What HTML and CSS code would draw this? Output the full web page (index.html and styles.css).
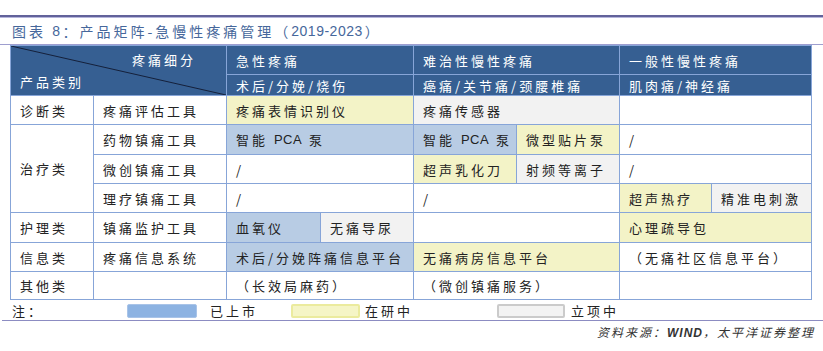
FILE: index.html
```html
<!DOCTYPE html>
<html lang="zh-CN">
<head>
<meta charset="utf-8">
<title>产品矩阵-急慢性疼痛管理</title>
<link rel="stylesheet" href="styles.css">
</head>
<body>
<div class="page">
  <div class="rule-top"></div>
  <div class="title">图表&nbsp;<span class="lat">8</span>：产品矩阵-急慢性疼痛管理（<span class="lat">2019-2023</span>）</div>
  <div class="rule"></div>

  <div class="matrix">
    <div class="c h diag">
      <svg class="diag-line" viewBox="0 0 215 49" preserveAspectRatio="none"><line x1="0" y1="0" x2="215" y2="49" stroke="#15203a" stroke-width="1"/></svg>
      <div class="diag-top">疼痛细分</div>
      <div class="diag-bottom">产品类别</div>
    </div>
    <div class="c h s2">急性疼痛</div>
    <div class="c h s2">难治性慢性疼痛</div>
    <div class="c h s2">一般性慢性疼痛</div>
    <div class="c h s2">术后/分娩/烧伤</div>
    <div class="c h s2">癌痛/关节痛/颈腰椎痛</div>
    <div class="c h s2">肌肉痛/神经痛</div>

    <div class="c">诊断类</div>
    <div class="c">疼痛评估工具</div>
    <div class="c s2 yel">疼痛表情识别仪</div>
    <div class="c s2 gray">疼痛传感器</div>
    <div class="c s2"></div>

    <div class="c r3">治疗类</div>
    <div class="c">药物镇痛工具</div>
    <div class="c s2 blue">智能&nbsp;<span class="abbr">PCA</span>&nbsp;泵</div>
    <div class="c blue">智能&nbsp;<span class="abbr">PCA</span>&nbsp;泵</div>
    <div class="c yel">微型贴片泵</div>
    <div class="c s2">/</div>

    <div class="c">微创镇痛工具</div>
    <div class="c s2">/</div>
    <div class="c yel">超声乳化刀</div>
    <div class="c gray">射频等离子</div>
    <div class="c s2">/</div>

    <div class="c">理疗镇痛工具</div>
    <div class="c s2">/</div>
    <div class="c s2">/</div>
    <div class="c yel">超声热疗</div>
    <div class="c gray">精准电刺激</div>

    <div class="c">护理类</div>
    <div class="c">镇痛监护工具</div>
    <div class="c blue">血氧仪</div>
    <div class="c gray">无痛导尿</div>
    <div class="c s2"></div>
    <div class="c s2 yel">心理疏导包</div>

    <div class="c">信息类</div>
    <div class="c">疼痛信息系统</div>
    <div class="c s2 blue">术后/分娩阵痛信息平台</div>
    <div class="c s2 yel">无痛病房信息平台</div>
    <div class="c s2">（无痛社区信息平台）</div>

    <div class="c">其他类</div>
    <div class="c"></div>
    <div class="c s2">（长效局麻药）</div>
    <div class="c s2">（微创镇痛服务）</div>
    <div class="c s2"></div>
  </div>

  <div class="legend">
    <div class="note">注：</div>
    <div class="sw sw-blue"></div>
    <div class="lbl lbl1">已上市</div>
    <div class="sw sw-yel"></div>
    <div class="lbl lbl2">在研中</div>
    <div class="sw sw-gray"></div>
    <div class="lbl lbl3">立项中</div>
  </div>
  <div class="rule2"></div>
  <div class="source">资料来源：<span class="src-lat">WIND</span>，太平洋证券整理</div>
</div>
</body>
</html>
```

FILE: styles.css
```css
html, body {
  margin: 0;
  padding: 0;
  background: #ffffff;
}

body {
  width: 823px;
  height: 351px;
  overflow: hidden;
  font-family: "Noto Sans CJK SC", "Noto Sans", sans-serif;
  color: #222222;
}

.page {
  padding-top: 15px;
}

.rule-top {
  height: 2px;
  background: #62629a;
  border-bottom: 1px solid #b6b6dc;
}

.title {
  height: 26px;
  display: flex;
  align-items: center;
  padding-left: 12px;
  font-size: 14px;
  letter-spacing: 3px;
  color: #46679b;
  line-height: 1;
  white-space: nowrap;
}

.title .lat {
  font-family: "Liberation Sans", sans-serif;
  font-size: 14px;
  letter-spacing: 0.5px;
  margin-right: 2px;
}

.rule {
  height: 1px;
  background: #9e9ecf;
}

.matrix {
  margin-left: 10px;
  width: 802px;
  box-sizing: border-box;
  display: grid;
  grid-template-columns: 82px 132px 93px 92px 102px 102px 91px 99px;
  grid-template-rows: 28px 20px 28px 29px 28px 28px 29px 28px 27px;
  gap: 1px;
  padding: 1px;
  background: #87a5d8;
}

.c {
  background: #ffffff;
  display: flex;
  align-items: center;
  padding-left: 9px;
  font-size: 13px;
  letter-spacing: 3px;
  line-height: 1;
  white-space: nowrap;
  overflow: hidden;
  min-width: 0;
}

.abbr {
  font-family: "Liberation Sans", sans-serif;
  letter-spacing: 0.5px;
  margin-right: 1px;
}

.h {
  background: #365f92;
  color: #ffffff;
}

.blue { background: #b8cce4; }
.yel { background: #f3f3c7; }
.gray { background: #f2f2f2; }

.s2 { grid-column: span 2; }
.r3 { grid-row: span 3; }

.diag {
  grid-column: span 2;
  grid-row: span 2;
  position: relative;
  display: block;
  padding: 0;
}

.diag-line {
  position: absolute;
  left: 0;
  top: 0;
  width: 100%;
  height: 100%;
}

.diag-top {
  position: relative;
  text-align: right;
  padding-right: 30px;
  padding-top: 7px;
  line-height: 14px;
}

.diag-bottom {
  position: relative;
  padding-left: 9px;
  margin-top: 8px;
  line-height: 14px;
}

.legend {
  height: 20px;
  display: flex;
  align-items: center;
  font-size: 13px;
  letter-spacing: 3px;
  line-height: 1;
  padding-left: 12px;
  white-space: nowrap;
}

.note { width: 115px; }

.sw {
  height: 14px;
  box-sizing: border-box;
  border-radius: 2px;
  margin-top: 1px;
}

.sw-blue {
  width: 70px;
  background: #8db3e2;
  border: 1px solid #a9c4e8;
}

.sw-yel {
  width: 69px;
  background: #f5f5c6;
  border: 2px solid #ebeb9e;
}

.sw-gray {
  width: 68px;
  background: #f3f3f3;
  border: 2px solid #cbcbcb;
}

.lbl1 { width: 81px; padding-left: 13px; }
.lbl2 { width: 132px; padding-left: 5px; }
.lbl3 { padding-left: 6px; }

.rule2 {
  margin-left: 2px;
  height: 1px;
  background: #8c8cc2;
}

.source {
  margin-top: 4px;
  text-align: right;
  padding-right: 8px;
  font-size: 12px;
  line-height: 14px;
  font-style: italic;
  letter-spacing: 2px;
  color: #333333;
  white-space: nowrap;
}

.src-lat {
  font-family: "Liberation Sans", sans-serif;
  font-weight: bold;
  letter-spacing: 1px;
}
```
